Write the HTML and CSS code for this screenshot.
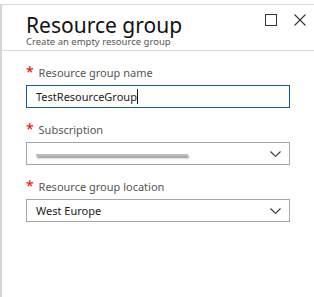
FILE: index.html
```html
<!doctype html>
<html>
<head>
<meta charset="UTF-8">
<meta name="viewport" content="width=device-width,initial-scale=1">
<title>Resource group</title>
<link rel="stylesheet" href="styles.css">
</head>
<body>
<div class="blade">
	<div class="blade_header">
		<div class="titles">
			<h1 class="title">Resource group</h1>
			<p class="subtitle">Create an empty resource group</p>
		</div>
		<div class="commands">
			<button type="button" class="btn_icon" title="Maximize">
				<svg width="12" height="12" viewBox="0 0 12 12"><rect x="0.5" y="0.5" width="11" height="11" fill="none" stroke="#333" stroke-width="1"/></svg>
			</button>
			<button type="button" class="btn_icon" title="Close">
				<svg width="12" height="12" viewBox="0 0 12 12"><path d="M0.5 0.5L11.5 11.5M11.5 0.5L0.5 11.5" stroke="#333" stroke-width="1.1" fill="none"/></svg>
			</button>
		</div>
	</div>

	<div class="blade_content">
		<div class="field">
			<label class="field_label"><span class="required">*</span> Resource group name</label>
			<div class="input_box is_focus">
				<span class="input_value">TestResourceGroup</span><span class="caret"></span>
			</div>
		</div>

		<div class="field">
			<label class="field_label"><span class="required">*</span> Subscription</label>
			<div class="input_box dropdown">
				<span class="redacted"></span>
				<svg class="chevron" width="11" height="6" viewBox="0 0 11 6"><path d="M0.5 0.5L5.5 5.3L10.5 0.5" stroke="#333" stroke-width="1.1" fill="none"/></svg>
			</div>
		</div>

		<div class="field">
			<label class="field_label"><span class="required">*</span> Resource group location</label>
			<div class="input_box dropdown">
				<span class="input_value">West Europe</span>
				<svg class="chevron" width="11" height="6" viewBox="0 0 11 6"><path d="M0.5 0.5L5.5 5.3L10.5 0.5" stroke="#333" stroke-width="1.1" fill="none"/></svg>
			</div>
		</div>
	</div>
</div>
</body>
</html>
```

FILE: styles.css
```css
html, body {
	margin: 0;
	padding: 0;
	height: 100%;
	background: #fff;
}
body {
	font-family: "Noto Sans", "Open Sans", sans-serif;
	color: #333;
}
.blade {
	box-sizing: border-box;
	margin-top: 4px;
	height: calc(100% - 4px);
	border-top: 1px solid #d9d9d9;
	border-left: 2px solid #d6d6d6;
}
.blade_header {
	display: flex;
	justify-content: space-between;
	height: 45px;
	padding-left: 24px;
	border-bottom: 1px solid #d9d9d9;
}
.title {
	margin: 10px 0 0;
	font-size: 21px;
	font-weight: normal;
	line-height: 20px;
	color: #111;
}
.subtitle {
	margin: 1px 0 0;
	font-size: 9.5px;
	line-height: 12px;
	color: #555;
}
.commands {
	display: flex;
	gap: 17px;
	padding: 9px 8px 0 0;
}
.btn_icon {
	width: 12px;
	height: 12px;
	padding: 0;
	border: 0;
	background: none;
}
.btn_icon svg {
	display: block;
}
.blade_content {
	padding: 14px 0 0 24px;
}
.field {
	width: 264px;
	margin-bottom: 14px;
}
.field_label {
	display: block;
	font-size: 11px;
	line-height: 16px;
	color: #555;
	margin-bottom: 4px;
}
.required {
	color: #e00;
	font-size: 14px;
	line-height: 12px;
	margin-right: 2px;
}
.input_box {
	box-sizing: border-box;
	display: flex;
	align-items: center;
	height: 23px;
	padding: 0 9px;
	border: 1px solid #a6a6a6;
	font-size: 11px;
	color: #222;
}
.input_box.is_focus {
	border-color: #0f5aa6;
}
.caret {
	display: inline-block;
	width: 1px;
	height: 15px;
	background: #111;
}
.dropdown {
	justify-content: space-between;
}
.redacted {
	display: block;
	width: 152px;
	height: 2px;
	margin-top: 2px;
	background: #bbb;
	box-shadow: 1px 2px 2px #888;
}
.chevron {
	margin-right: -1px;
}
```
